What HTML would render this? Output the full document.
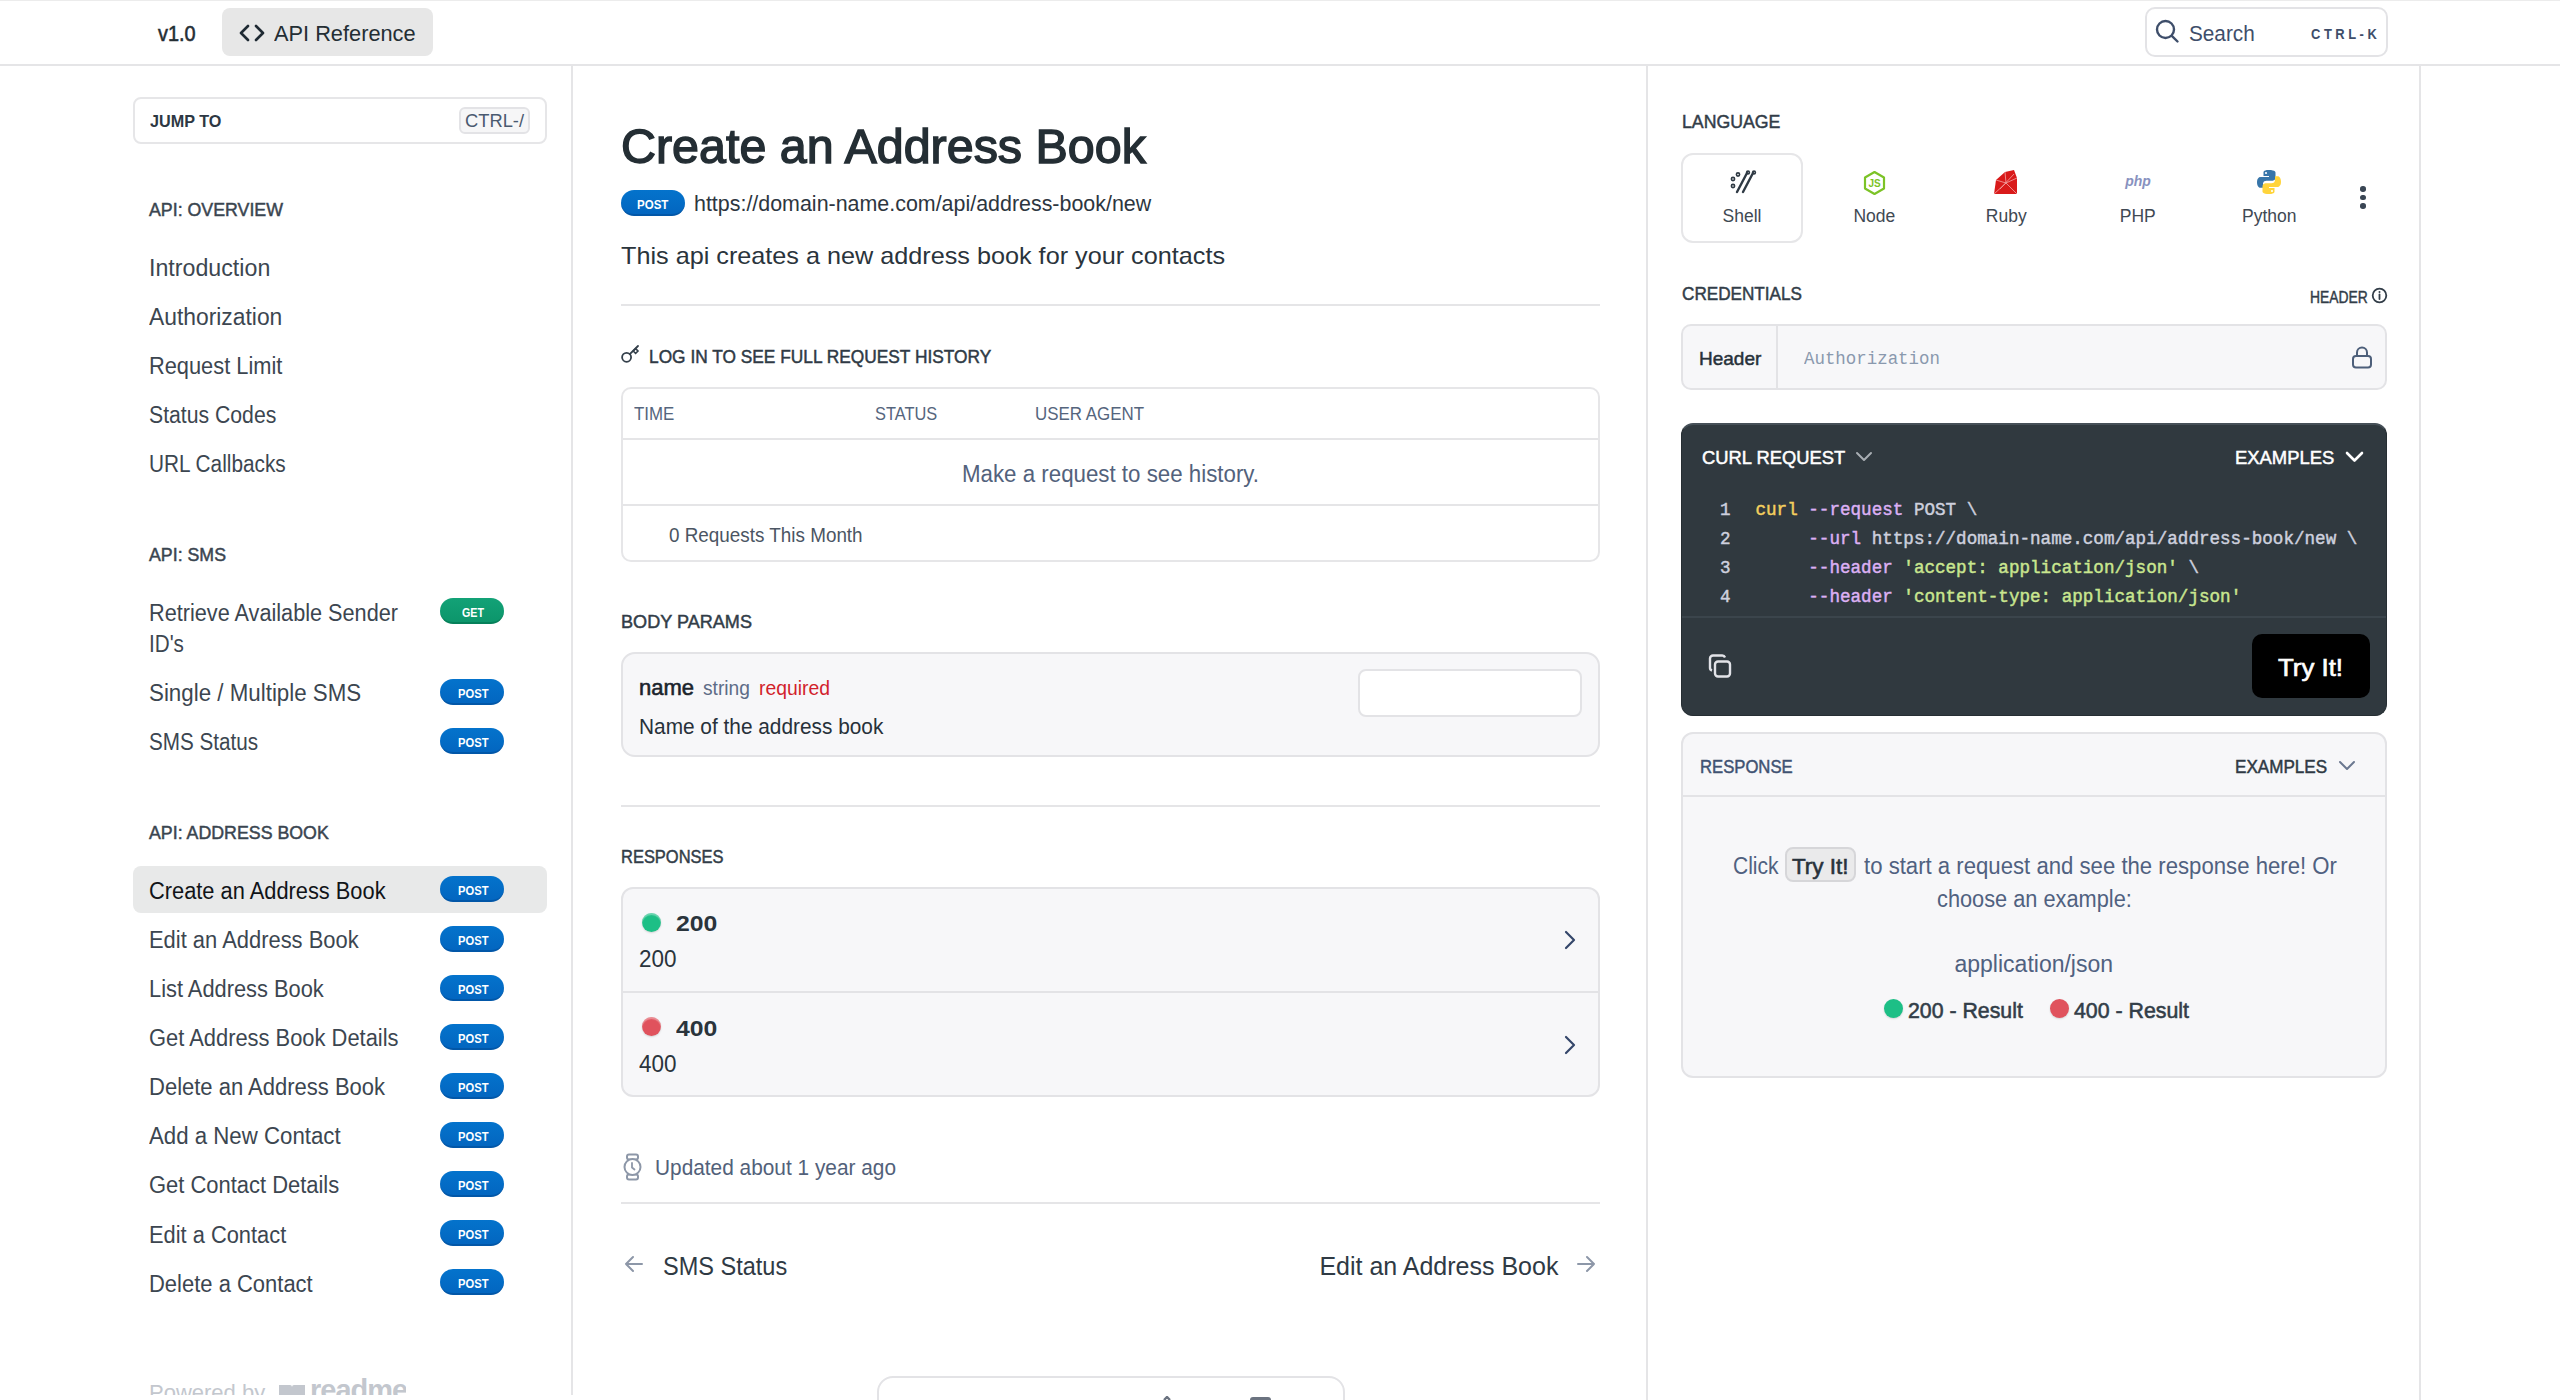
<!DOCTYPE html>
<html><head><meta charset="utf-8"><title>Create an Address Book</title>
<style>
html,body{margin:0;padding:0;background:#fff;width:2560px;height:1400px;overflow:hidden;position:relative}
.t{position:absolute;white-space:nowrap;line-height:0;height:0}
</style></head><body>
<div style="position:absolute;left:0px;top:0px;width:2560px;height:1px;background:#ececec"></div>
<div style="position:absolute;left:0px;top:64px;width:2560px;height:2px;background:#e5e5e7"></div>
<div style="position:absolute;left:571px;top:66px;width:2px;height:1329px;background:#e5e5e7"></div>
<div style="position:absolute;left:1646px;top:66px;width:2px;height:1334px;background:#e5e5e7"></div>
<div style="position:absolute;left:2419px;top:66px;width:2px;height:1334px;background:#e5e5e7"></div>
<div class="t" style="left:158.00px;top:34px;font-family:'Liberation Sans', sans-serif;font-weight:400;font-size:22px;color:#242e34;transform:scaleX(0.9043);transform-origin:0 0;-webkit-text-stroke:0.57px #242e34;">v1.0</div>
<div style="position:absolute;left:222px;top:8px;width:211px;height:48px;background:#e7e7e7;border-radius:8px"></div>
<svg style="position:absolute;left:238px;top:24px;" width="28" height="18" viewBox="0 0 28 18"><path d="M10 2 L3 9 L10 16 M18 2 L25 9 L18 16" fill="none" stroke="#1f2a33" stroke-width="2.6" stroke-linecap="round" stroke-linejoin="round"/></svg>
<div class="t" style="left:274.00px;top:33.6px;font-family:'Liberation Sans', sans-serif;font-weight:400;font-size:21.5px;color:#242e34;transform:scaleX(1.0128);transform-origin:0 0;">API Reference</div>
<div style="position:absolute;left:2145px;top:7px;width:243px;height:50px;box-sizing:border-box;border:2px solid #e3e3e6;border-radius:10px;background:#fff"></div>
<svg style="position:absolute;left:2155px;top:19px;" width="25" height="25" viewBox="0 0 25 25"><circle cx="10.5" cy="10.5" r="8.5" fill="none" stroke="#3e4e6a" stroke-width="2.4"/><path d="M16.8 16.8 L22.5 22.5" stroke="#3e4e6a" stroke-width="2.4" stroke-linecap="round"/></svg>
<div class="t" style="left:2189.00px;top:34px;font-family:'Liberation Sans', sans-serif;font-weight:400;font-size:22px;color:#3e4e6a;transform:scaleX(0.9427);transform-origin:0 0;">Search</div>
<div class="t" style="left:2311.00px;top:33.5px;font-family:'Liberation Sans', sans-serif;font-weight:700;font-size:14px;color:#3e4e6a;transform:scaleX(0.9216);transform-origin:0 0;">C T R L - K</div>
<div style="position:absolute;left:133px;top:97px;width:414px;height:47px;box-sizing:border-box;border:2px solid #e6e6e8;border-radius:8px;background:#fff"></div>
<div class="t" style="left:149.60px;top:122px;font-family:'Liberation Sans', sans-serif;font-weight:700;font-size:17px;color:#2d3843;transform:scaleX(0.9526);transform-origin:0 0;">JUMP TO</div>
<div style="position:absolute;left:459px;top:107px;width:71px;height:27px;box-sizing:border-box;border:2px solid #e3e3e6;border-radius:6px;background:#f6f6f7"></div>
<div class="t" style="left:465.00px;top:121px;font-family:'Liberation Sans', sans-serif;font-weight:400;font-size:18px;color:#4a5a70;transform:scaleX(1.0173);transform-origin:0 0;">CTRL-/</div>
<div class="t" style="left:149.00px;top:209.6px;font-family:'Liberation Sans', sans-serif;font-weight:400;font-size:18px;color:#3a4550;transform:scaleX(0.9875);transform-origin:0 0;-webkit-text-stroke:0.47px #3a4550;">API: OVERVIEW</div>
<div class="t" style="left:149.00px;top:267.7px;font-family:'Liberation Sans', sans-serif;font-weight:400;font-size:23px;color:#3c4650;transform:scaleX(1.0092);transform-origin:0 0;">Introduction</div>
<div class="t" style="left:149.00px;top:317.1px;font-family:'Liberation Sans', sans-serif;font-weight:400;font-size:23px;color:#3c4650;transform:scaleX(0.9929);transform-origin:0 0;">Authorization</div>
<div class="t" style="left:149.00px;top:365.6px;font-family:'Liberation Sans', sans-serif;font-weight:400;font-size:23px;color:#3c4650;transform:scaleX(0.9479);transform-origin:0 0;">Request Limit</div>
<div class="t" style="left:149.00px;top:414.6px;font-family:'Liberation Sans', sans-serif;font-weight:400;font-size:23px;color:#3c4650;transform:scaleX(0.9220);transform-origin:0 0;">Status Codes</div>
<div class="t" style="left:149.00px;top:464px;font-family:'Liberation Sans', sans-serif;font-weight:400;font-size:23px;color:#3c4650;transform:scaleX(0.9038);transform-origin:0 0;">URL Callbacks</div>
<div class="t" style="left:149.00px;top:554.5px;font-family:'Liberation Sans', sans-serif;font-weight:400;font-size:18px;color:#3a4550;transform:scaleX(0.9868);transform-origin:0 0;-webkit-text-stroke:0.47px #3a4550;">API: SMS</div>
<div class="t" style="left:149.00px;top:613px;font-family:'Liberation Sans', sans-serif;font-weight:400;font-size:23px;color:#3c4650;transform:scaleX(0.9423);transform-origin:0 0;">Retrieve Available Sender</div>
<div class="t" style="left:149.00px;top:643.5px;font-family:'Liberation Sans', sans-serif;font-weight:400;font-size:23px;color:#3c4650;transform:scaleX(0.8973);transform-origin:0 0;">ID's</div>
<div style="position:absolute;left:440px;top:598px;width:64px;height:26px;box-sizing:border-box;background:linear-gradient(#13a277,#0c966b);border-radius:13px;border-bottom:2px solid #06805a"></div>
<div class="t" style="left:462.00px;top:612.6px;font-family:'Liberation Sans', sans-serif;font-weight:700;font-size:13.5px;color:#fff;transform:scaleX(0.7926);transform-origin:0 0;">GET</div>
<div class="t" style="left:149.00px;top:692.6px;font-family:'Liberation Sans', sans-serif;font-weight:400;font-size:23px;color:#3c4650;transform:scaleX(0.9710);transform-origin:0 0;">Single / Multiple SMS</div>
<div style="position:absolute;left:440px;top:679px;width:64px;height:26px;box-sizing:border-box;background:linear-gradient(#0473cc,#0366c0);border-radius:13px;border-bottom:2px solid #0257a8"></div>
<div class="t" style="left:457.50px;top:693.8px;font-family:'Liberation Sans', sans-serif;font-weight:700;font-size:13.5px;color:#fff;transform:scaleX(0.8297);transform-origin:0 0;">POST</div>
<div class="t" style="left:149.00px;top:742px;font-family:'Liberation Sans', sans-serif;font-weight:400;font-size:23px;color:#3c4650;transform:scaleX(0.8984);transform-origin:0 0;">SMS Status</div>
<div style="position:absolute;left:440px;top:728px;width:64px;height:26px;box-sizing:border-box;background:linear-gradient(#0473cc,#0366c0);border-radius:13px;border-bottom:2px solid #0257a8"></div>
<div class="t" style="left:457.50px;top:742.8px;font-family:'Liberation Sans', sans-serif;font-weight:700;font-size:13.5px;color:#fff;transform:scaleX(0.8297);transform-origin:0 0;">POST</div>
<div class="t" style="left:149.00px;top:832.7px;font-family:'Liberation Sans', sans-serif;font-weight:400;font-size:18px;color:#3a4550;transform:scaleX(0.9876);transform-origin:0 0;-webkit-text-stroke:0.47px #3a4550;">API: ADDRESS BOOK</div>
<div style="position:absolute;left:133px;top:866px;width:414px;height:47px;background:#e8e9e9;border-radius:8px"></div>
<div class="t" style="left:149.00px;top:890.8px;font-family:'Liberation Sans', sans-serif;font-weight:400;font-size:23px;color:#111418;transform:scaleX(0.9488);transform-origin:0 0;">Create an Address Book</div>
<div style="position:absolute;left:440px;top:876px;width:64px;height:26px;box-sizing:border-box;background:linear-gradient(#0473cc,#0366c0);border-radius:13px;border-bottom:2px solid #0257a8"></div>
<div class="t" style="left:457.50px;top:890.8px;font-family:'Liberation Sans', sans-serif;font-weight:700;font-size:13.5px;color:#fff;transform:scaleX(0.8297);transform-origin:0 0;">POST</div>
<div class="t" style="left:149.00px;top:939.9px;font-family:'Liberation Sans', sans-serif;font-weight:400;font-size:23px;color:#3c4650;transform:scaleX(0.9533);transform-origin:0 0;">Edit an Address Book</div>
<div style="position:absolute;left:440px;top:926px;width:64px;height:26px;box-sizing:border-box;background:linear-gradient(#0473cc,#0366c0);border-radius:13px;border-bottom:2px solid #0257a8"></div>
<div class="t" style="left:457.50px;top:940.8px;font-family:'Liberation Sans', sans-serif;font-weight:700;font-size:13.5px;color:#fff;transform:scaleX(0.8297);transform-origin:0 0;">POST</div>
<div class="t" style="left:149.00px;top:989.0px;font-family:'Liberation Sans', sans-serif;font-weight:400;font-size:23px;color:#3c4650;transform:scaleX(0.9493);transform-origin:0 0;">List Address Book</div>
<div style="position:absolute;left:440px;top:975px;width:64px;height:26px;box-sizing:border-box;background:linear-gradient(#0473cc,#0366c0);border-radius:13px;border-bottom:2px solid #0257a8"></div>
<div class="t" style="left:457.50px;top:989.8px;font-family:'Liberation Sans', sans-serif;font-weight:700;font-size:13.5px;color:#fff;transform:scaleX(0.8297);transform-origin:0 0;">POST</div>
<div class="t" style="left:149.00px;top:1038.1px;font-family:'Liberation Sans', sans-serif;font-weight:400;font-size:23px;color:#3c4650;transform:scaleX(0.9520);transform-origin:0 0;">Get Address Book Details</div>
<div style="position:absolute;left:440px;top:1024px;width:64px;height:26px;box-sizing:border-box;background:linear-gradient(#0473cc,#0366c0);border-radius:13px;border-bottom:2px solid #0257a8"></div>
<div class="t" style="left:457.50px;top:1038.8px;font-family:'Liberation Sans', sans-serif;font-weight:700;font-size:13.5px;color:#fff;transform:scaleX(0.8297);transform-origin:0 0;">POST</div>
<div class="t" style="left:149.00px;top:1087.2px;font-family:'Liberation Sans', sans-serif;font-weight:400;font-size:23px;color:#3c4650;transform:scaleX(0.9566);transform-origin:0 0;">Delete an Address Book</div>
<div style="position:absolute;left:440px;top:1073px;width:64px;height:26px;box-sizing:border-box;background:linear-gradient(#0473cc,#0366c0);border-radius:13px;border-bottom:2px solid #0257a8"></div>
<div class="t" style="left:457.50px;top:1087.8px;font-family:'Liberation Sans', sans-serif;font-weight:700;font-size:13.5px;color:#fff;transform:scaleX(0.8297);transform-origin:0 0;">POST</div>
<div class="t" style="left:149.00px;top:1136.3px;font-family:'Liberation Sans', sans-serif;font-weight:400;font-size:23px;color:#3c4650;transform:scaleX(0.9669);transform-origin:0 0;">Add a New Contact</div>
<div style="position:absolute;left:440px;top:1122px;width:64px;height:26px;box-sizing:border-box;background:linear-gradient(#0473cc,#0366c0);border-radius:13px;border-bottom:2px solid #0257a8"></div>
<div class="t" style="left:457.50px;top:1136.8px;font-family:'Liberation Sans', sans-serif;font-weight:700;font-size:13.5px;color:#fff;transform:scaleX(0.8297);transform-origin:0 0;">POST</div>
<div class="t" style="left:149.00px;top:1185.4px;font-family:'Liberation Sans', sans-serif;font-weight:400;font-size:23px;color:#3c4650;transform:scaleX(0.9538);transform-origin:0 0;">Get Contact Details</div>
<div style="position:absolute;left:440px;top:1171px;width:64px;height:26px;box-sizing:border-box;background:linear-gradient(#0473cc,#0366c0);border-radius:13px;border-bottom:2px solid #0257a8"></div>
<div class="t" style="left:457.50px;top:1185.8px;font-family:'Liberation Sans', sans-serif;font-weight:700;font-size:13.5px;color:#fff;transform:scaleX(0.8297);transform-origin:0 0;">POST</div>
<div class="t" style="left:149.00px;top:1234.5px;font-family:'Liberation Sans', sans-serif;font-weight:400;font-size:23px;color:#3c4650;transform:scaleX(0.9497);transform-origin:0 0;">Edit a Contact</div>
<div style="position:absolute;left:440px;top:1220px;width:64px;height:26px;box-sizing:border-box;background:linear-gradient(#0473cc,#0366c0);border-radius:13px;border-bottom:2px solid #0257a8"></div>
<div class="t" style="left:457.50px;top:1234.8px;font-family:'Liberation Sans', sans-serif;font-weight:700;font-size:13.5px;color:#fff;transform:scaleX(0.8297);transform-origin:0 0;">POST</div>
<div class="t" style="left:149.00px;top:1283.6px;font-family:'Liberation Sans', sans-serif;font-weight:400;font-size:23px;color:#3c4650;transform:scaleX(0.9555);transform-origin:0 0;">Delete a Contact</div>
<div style="position:absolute;left:440px;top:1269px;width:64px;height:26px;box-sizing:border-box;background:linear-gradient(#0473cc,#0366c0);border-radius:13px;border-bottom:2px solid #0257a8"></div>
<div class="t" style="left:457.50px;top:1283.8px;font-family:'Liberation Sans', sans-serif;font-weight:700;font-size:13.5px;color:#fff;transform:scaleX(0.8297);transform-origin:0 0;">POST</div>
<div class="t" style="left:149.00px;top:1393px;font-family:'Liberation Sans', sans-serif;font-weight:400;font-size:22px;color:#c3c7ce;">Powered by</div>
<div style="position:absolute;left:276px;top:1378px;width:130px;height:17px;overflow:hidden"><svg width="28" height="18" viewBox="0 0 28 18" style="position:absolute;left:2px;top:5px"><path d="M1 2 h11 a2 2 0 0 1 2 2 a2 2 0 0 1 2 -2 h11 v15 h-11 a2 2 0 0 0 -2 1 a2 2 0 0 0 -2 -1 h-11z" fill="#c3c7ce"/></svg><div style="position:absolute;left:34px;top:-4px;font:700 29px 'Liberation Sans',sans-serif;color:#c3c7ce;letter-spacing:-1px">readme</div></div>
<div style="position:absolute;left:0px;top:1395px;width:571px;height:5px;background:#fff"></div>
<div class="t" style="left:621.00px;top:146.5px;font-family:'Liberation Sans', sans-serif;font-weight:400;font-size:48px;color:#242e34;transform:scaleX(1.0088);transform-origin:0 0;-webkit-text-stroke:1.44px #242e34;">Create an Address Book</div>
<div style="position:absolute;left:621px;top:190px;width:64px;height:26px;box-sizing:border-box;background:linear-gradient(#0473cc,#0366c0);border-radius:13px;border-bottom:2px solid #0257a8"></div>
<div class="t" style="left:637.20px;top:204.8px;font-family:'Liberation Sans', sans-serif;font-weight:700;font-size:13.7px;color:#fff;transform:scaleX(0.8417);transform-origin:0 0;">POST</div>
<div class="t" style="left:693.75px;top:204px;font-family:'Liberation Sans', sans-serif;font-weight:400;font-size:22px;color:#2d3640;transform:scaleX(0.9736);transform-origin:0 0;">https://domain-name.com/api/address-book/new</div>
<div class="t" style="left:621.00px;top:255.75px;font-family:'Liberation Sans', sans-serif;font-weight:400;font-size:24px;color:#2a343c;transform:scaleX(1.0505);transform-origin:0 0;">This api creates a new address book for your contacts</div>
<div style="position:absolute;left:621px;top:304px;width:979px;height:2px;background:#e5e5e7"></div>
<svg style="position:absolute;left:620px;top:344px;" width="22" height="22" viewBox="0 0 22 22"><circle cx="6.6" cy="13.3" r="4.5" fill="none" stroke="#34404b" stroke-width="1.8"/><path d="M9.8 10.1 L18 2" fill="none" stroke="#34404b" stroke-width="1.8" stroke-linecap="round"/><path d="M15.6 4.6 L18 7 L15.6 9.4 L13.2 7 Z" fill="none" stroke="#34404b" stroke-width="1.6"/></svg>
<div class="t" style="left:648.75px;top:356.7px;font-family:'Liberation Sans', sans-serif;font-weight:400;font-size:18.5px;color:#2f3a45;transform:scaleX(0.9360);transform-origin:0 0;-webkit-text-stroke:0.48px #2f3a45;">LOG IN TO SEE FULL REQUEST HISTORY</div>
<div style="position:absolute;left:621px;top:387px;width:979px;height:175px;box-sizing:border-box;border:2px solid #e6e6e8;border-radius:10px;background:#fff"></div>
<div style="position:absolute;left:623px;top:438px;width:975px;height:2px;background:#e5e5e7"></div>
<div style="position:absolute;left:623px;top:504px;width:975px;height:2px;background:#e5e5e7"></div>
<div class="t" style="left:634.20px;top:413.7px;font-family:'Liberation Sans', sans-serif;font-weight:400;font-size:18px;color:#55657d;transform:scaleX(0.9372);transform-origin:0 0;">TIME</div>
<div class="t" style="left:874.80px;top:413.7px;font-family:'Liberation Sans', sans-serif;font-weight:400;font-size:18px;color:#55657d;transform:scaleX(0.9103);transform-origin:0 0;">STATUS</div>
<div class="t" style="left:1035.00px;top:413.7px;font-family:'Liberation Sans', sans-serif;font-weight:400;font-size:18px;color:#55657d;transform:scaleX(0.9394);transform-origin:0 0;">USER AGENT</div>
<div class="t" style="left:962.00px;top:474px;font-family:'Liberation Sans', sans-serif;font-weight:400;font-size:23px;color:#53627c;transform:scaleX(0.9694);transform-origin:0 0;">Make a request to see history.</div>
<div class="t" style="left:669.40px;top:535px;font-family:'Liberation Sans', sans-serif;font-weight:400;font-size:19.5px;color:#4b5563;transform:scaleX(0.9672);transform-origin:0 0;">0 Requests This Month</div>
<div class="t" style="left:621.00px;top:621.8px;font-family:'Liberation Sans', sans-serif;font-weight:400;font-size:18.5px;color:#323d48;transform:scaleX(0.9776);transform-origin:0 0;-webkit-text-stroke:0.48px #323d48;">BODY PARAMS</div>
<div style="position:absolute;left:621px;top:652px;width:979px;height:105px;box-sizing:border-box;border:2px solid #e3e3e6;border-radius:14px;background:#f7f7f9"></div>
<div class="t" style="left:639.00px;top:688.3px;font-family:'Liberation Sans', sans-serif;font-weight:400;font-size:22px;color:#1b242c;-webkit-text-stroke:0.57px #1b242c;">name</div>
<div class="t" style="left:703.00px;top:688.3px;font-family:'Liberation Sans', sans-serif;font-weight:400;font-size:20px;color:#5d6c87;transform:scaleX(0.9611);transform-origin:0 0;">string</div>
<div class="t" style="left:759.00px;top:688.3px;font-family:'Liberation Sans', sans-serif;font-weight:400;font-size:20px;color:#d21f2c;transform:scaleX(0.9676);transform-origin:0 0;">required</div>
<div class="t" style="left:639.00px;top:727px;font-family:'Liberation Sans', sans-serif;font-weight:400;font-size:21.5px;color:#27313a;transform:scaleX(0.9690);transform-origin:0 0;">Name of the address book</div>
<div style="position:absolute;left:1358px;top:669px;width:224px;height:48px;box-sizing:border-box;border:2px solid #e3e3e6;border-radius:8px;background:#fff"></div>
<div style="position:absolute;left:621px;top:805px;width:979px;height:2px;background:#e5e5e7"></div>
<div class="t" style="left:621.00px;top:856.7px;font-family:'Liberation Sans', sans-serif;font-weight:400;font-size:18px;color:#323d48;transform:scaleX(0.9149);transform-origin:0 0;-webkit-text-stroke:0.47px #323d48;">RESPONSES</div>
<div style="position:absolute;left:621px;top:887px;width:979px;height:210px;box-sizing:border-box;border:2px solid #e3e3e6;border-radius:12px;background:#f7f7f9"></div>
<div style="position:absolute;left:623px;top:991px;width:975px;height:2px;background:#e3e3e6"></div>
<div style="position:absolute;left:642px;top:912.5px;width:19px;height:19px;border-radius:50%;background:#1dbf86;box-shadow:0 1px 2px rgba(0,0,0,.15), inset 0 2px 1px rgba(255,255,255,.35)"></div>
<div class="t" style="left:675.50px;top:924px;font-family:'Liberation Sans', sans-serif;font-weight:700;font-size:22px;color:#2a343c;transform:scaleX(1.1255);transform-origin:0 0;">200</div>
<div class="t" style="left:638.50px;top:959px;font-family:'Liberation Sans', sans-serif;font-weight:400;font-size:24px;color:#2a343c;transform:scaleX(0.9368);transform-origin:0 0;">200</div>
<svg style="position:absolute;left:1562px;top:930px;" width="16" height="20" viewBox="0 0 16 20"><path d="M4 2 L12 10 L4 18" fill="none" stroke="#34466a" stroke-width="2.2" stroke-linecap="round" stroke-linejoin="round"/></svg>
<div style="position:absolute;left:642px;top:1017.0px;width:19px;height:19px;border-radius:50%;background:#e0525d;box-shadow:0 1px 2px rgba(0,0,0,.15), inset 0 2px 1px rgba(255,255,255,.35)"></div>
<div class="t" style="left:675.50px;top:1028.5px;font-family:'Liberation Sans', sans-serif;font-weight:700;font-size:22px;color:#2a343c;transform:scaleX(1.1255);transform-origin:0 0;">400</div>
<div class="t" style="left:638.50px;top:1063.5px;font-family:'Liberation Sans', sans-serif;font-weight:400;font-size:24px;color:#2a343c;transform:scaleX(0.9368);transform-origin:0 0;">400</div>
<svg style="position:absolute;left:1562px;top:1034.5px;" width="16" height="20" viewBox="0 0 16 20"><path d="M4 2 L12 10 L4 18" fill="none" stroke="#34466a" stroke-width="2.2" stroke-linecap="round" stroke-linejoin="round"/></svg>
<svg style="position:absolute;left:622px;top:1152px;" width="22" height="30" viewBox="0 0 22 30"><rect x="5" y="2.5" width="11" height="5" rx="2" fill="none" stroke="#8d97a8" stroke-width="2"/><rect x="5" y="22.5" width="11" height="5" rx="2" fill="none" stroke="#8d97a8" stroke-width="2"/><circle cx="10.5" cy="15" r="8" fill="#fff" stroke="#8d97a8" stroke-width="2"/><path d="M10 11 V15.5 L12.5 17.5" fill="none" stroke="#8d97a8" stroke-width="1.8" stroke-linecap="round"/></svg>
<div class="t" style="left:655.00px;top:1167.6px;font-family:'Liberation Sans', sans-serif;font-weight:400;font-size:21.5px;color:#52617a;transform:scaleX(0.9692);transform-origin:0 0;">Updated about 1 year ago</div>
<div style="position:absolute;left:621px;top:1202px;width:979px;height:2px;background:#e5e5e7"></div>
<svg style="position:absolute;left:622px;top:1254px;" width="22" height="20" viewBox="0 0 22 20"><path d="M20 10 H4 M11 3 L4 10 L11 17" fill="none" stroke="#8d97a8" stroke-width="2" stroke-linecap="round" stroke-linejoin="round"/></svg>
<div class="t" style="left:663.30px;top:1265.8px;font-family:'Liberation Sans', sans-serif;font-weight:400;font-size:25px;color:#2f3a44;transform:scaleX(0.9409);transform-origin:0 0;">SMS Status</div>
<div class="t" style="left:1319.40px;top:1266px;font-family:'Liberation Sans', sans-serif;font-weight:400;font-size:25px;color:#2f3a44;">Edit an Address Book</div>
<svg style="position:absolute;left:1576px;top:1254px;" width="22" height="20" viewBox="0 0 22 20"><path d="M2 10 H18 M11 3 L18 10 L11 17" fill="none" stroke="#8d97a8" stroke-width="2" stroke-linecap="round" stroke-linejoin="round"/></svg>
<div style="position:absolute;left:877px;top:1376px;width:468px;height:64px;box-sizing:border-box;border:2px solid #e3e3e6;border-radius:16px;background:#fff"></div>
<svg style="position:absolute;left:1160px;top:1396px;" width="14" height="4" viewBox="0 0 14 4"><path d="M4 4 L7 1 L10 4" fill="none" stroke="#6b7380" stroke-width="2.4"/></svg>
<div style="position:absolute;left:1250px;top:1397px;width:21px;height:3px;background:#6b7380;border-radius:3px 3px 0 0"></div>
<div class="t" style="left:1681.90px;top:122px;font-family:'Liberation Sans', sans-serif;font-weight:400;font-size:18px;color:#323d48;transform:scaleX(0.9837);transform-origin:0 0;-webkit-text-stroke:0.47px #323d48;">LANGUAGE</div>
<div style="position:absolute;left:1681px;top:153px;width:122px;height:90px;box-sizing:border-box;border:2px solid #e6e6e8;border-radius:12px;background:#fff"></div>
<div class="t" style="left:1722.54px;top:216px;font-family:'Liberation Sans', sans-serif;font-weight:400;font-size:17.5px;color:#3f4953;">Shell</div>
<div class="t" style="left:1853.48px;top:216px;font-family:'Liberation Sans', sans-serif;font-weight:400;font-size:17.5px;color:#3f4953;">Node</div>
<div class="t" style="left:1985.87px;top:216px;font-family:'Liberation Sans', sans-serif;font-weight:400;font-size:17.5px;color:#3f4953;">Ruby</div>
<div class="t" style="left:2119.76px;top:216px;font-family:'Liberation Sans', sans-serif;font-weight:400;font-size:17.5px;color:#3f4953;">PHP</div>
<div class="t" style="left:2242.01px;top:216px;font-family:'Liberation Sans', sans-serif;font-weight:400;font-size:17.5px;color:#3f4953;">Python</div>
<svg style="position:absolute;left:1728px;top:170px;" width="30" height="24" viewBox="0 0 30 24"><g fill="none" stroke="#2f3a44" stroke-width="1.6"><circle cx="5" cy="9" r="1.6"/><circle cx="5" cy="16" r="1.6"/><path d="M9 22 L19 3 M15 22 L25 3" stroke-width="2.4" stroke-linecap="round"/><circle cx="10" cy="4.5" r="1.6"/><circle cx="20" cy="2.5" r="1.4"/><circle cx="26" cy="2.5" r="1.4"/></g></svg>
<svg style="position:absolute;left:1862px;top:170px;" width="25" height="26" viewBox="0 0 25 26"><path d="M12.5 2 L22 7.5 V18.5 L12.5 24 L3 18.5 V7.5 Z" fill="none" stroke="#7cc327" stroke-width="2.2" stroke-linejoin="round"/><text x="12.6" y="17" text-anchor="middle" font-family="Liberation Sans" font-weight="700" font-size="10" fill="#7cc327">JS</text></svg>
<svg style="position:absolute;left:1992px;top:169px;" width="27" height="27" viewBox="0 0 27 27"><path d="M2 25 L4 11 L13 3 L22 1 L25 9 L25 25 Z" fill="#d91a1a"/><path d="M4 11 L14 14 L25 9 M14 14 L13 3 M14 14 L2 25 M14 14 L25 25 M8 20 L22 5" stroke="#f2a5a5" stroke-width="0.8" fill="none"/></svg>
<svg style="position:absolute;left:2122px;top:173px;" width="32" height="18" viewBox="0 0 32 18"><text x="16" y="13" text-anchor="middle" font-family="Liberation Sans" font-style="italic" font-weight="700" font-size="14" fill="#8892bf">php</text></svg>
<svg style="position:absolute;left:2255px;top:168px;" width="28" height="28" viewBox="0 0 28 28"><path d="M13.5 2 C8 2 8.5 4.5 8.5 4.5 V8 H14 V9 H6 C6 9 2 8.6 2 14.3 C2 20 5.5 19.8 5.5 19.8 H8 V16.3 C8 16.3 7.8 12.8 11.5 12.8 H17 C17 12.8 20.5 12.9 20.5 9.5 V4.6 C20.5 4.6 21 2 13.5 2 Z" fill="#3775a9"/><path d="M14.5 26 C20 26 19.5 23.5 19.5 23.5 V20 H14 V19 H22 C22 19 26 19.4 26 13.7 C26 8 22.5 8.2 22.5 8.2 H20 V11.7 C20 11.7 20.2 15.2 16.5 15.2 H11 C11 15.2 7.5 15.1 7.5 18.5 V23.4 C7.5 23.4 7 26 14.5 26 Z" fill="#ffd43b"/><circle cx="11" cy="5" r="1.1" fill="#fff"/><circle cx="17" cy="23" r="1.1" fill="#fff"/></svg>
<div style="position:absolute;left:2360.25px;top:186.25px;width:5.5px;height:5.5px;border-radius:50%;background:#3a4654"></div>
<div style="position:absolute;left:2360.25px;top:194.75px;width:5.5px;height:5.5px;border-radius:50%;background:#3a4654"></div>
<div style="position:absolute;left:2360.25px;top:203.25px;width:5.5px;height:5.5px;border-radius:50%;background:#3a4654"></div>
<div class="t" style="left:1681.50px;top:293.75px;font-family:'Liberation Sans', sans-serif;font-weight:400;font-size:18px;color:#323d48;transform:scaleX(0.9521);transform-origin:0 0;-webkit-text-stroke:0.47px #323d48;">CREDENTIALS</div>
<div class="t" style="left:2310.00px;top:297.5px;font-family:'Liberation Sans', sans-serif;font-weight:400;font-size:16px;color:#323d48;transform:scaleX(0.8652);transform-origin:0 0;-webkit-text-stroke:0.42px #323d48;">HEADER</div>
<svg style="position:absolute;left:2371px;top:287px;" width="17" height="17" viewBox="0 0 17 17"><circle cx="8.5" cy="8.5" r="6.8" fill="none" stroke="#323d48" stroke-width="1.8"/><path d="M8.5 7.5 V12" stroke="#323d48" stroke-width="1.8" stroke-linecap="round"/><circle cx="8.5" cy="5" r="1" fill="#323d48"/></svg>
<div style="position:absolute;left:1681px;top:324px;width:706px;height:66px;box-sizing:border-box;border:2px solid #e3e3e6;border-radius:10px;background:#f7f7f9"></div>
<div style="position:absolute;left:1776px;top:326px;width:2px;height:62px;background:#e3e3e6"></div>
<div class="t" style="left:1699.00px;top:359px;font-family:'Liberation Sans', sans-serif;font-weight:400;font-size:19px;color:#27313a;-webkit-text-stroke:0.49px #27313a;">Header</div>
<div class="t" style="left:1803.50px;top:358.5px;font-family:'Liberation Mono', monospace;font-weight:400;font-size:17.5px;color:#8a99ae;transform:scaleX(0.9955);transform-origin:0 0;">Authorization</div>
<svg style="position:absolute;left:2350px;top:344px;" width="24" height="26" viewBox="0 0 24 26"><path d="M7 12 V8.5 a5 5 0 0 1 10 0 V12" fill="none" stroke="#4d5f7a" stroke-width="2"/><rect x="3" y="12" width="18" height="11.5" rx="3" fill="none" stroke="#4d5f7a" stroke-width="2"/></svg>
<div style="position:absolute;left:1681px;top:423px;width:706px;height:293px;box-sizing:border-box;background:#30393f;border-radius:12px;border:1px solid #262e33;border-top:2px solid #465058"></div>
<div class="t" style="left:1701.50px;top:458.3px;font-family:'Liberation Sans', sans-serif;font-weight:400;font-size:18.5px;color:#ffffff;transform:scaleX(0.9928);transform-origin:0 0;-webkit-text-stroke:0.48px #ffffff;">CURL REQUEST</div>
<svg style="position:absolute;left:1855px;top:451px;" width="18" height="12" viewBox="0 0 18 12"><path d="M2 2 L9 9 L16 2" fill="none" stroke="#a8aeb3" stroke-width="2" stroke-linecap="round" stroke-linejoin="round"/></svg>
<div class="t" style="left:2234.70px;top:458.4px;font-family:'Liberation Sans', sans-serif;font-weight:400;font-size:18.5px;color:#ffffff;transform:scaleX(0.9957);transform-origin:0 0;-webkit-text-stroke:0.48px #ffffff;">EXAMPLES</div>
<svg style="position:absolute;left:2345px;top:450px;" width="19" height="14" viewBox="0 0 19 14"><path d="M2 3 L9.5 10.5 L17 3" fill="none" stroke="#ffffff" stroke-width="2.6" stroke-linecap="round" stroke-linejoin="round"/></svg>
<div class="t" style="left:1720px;top:510px;font-family:'Liberation Mono', monospace;font-size:17.6px;color:#cdd0de;-webkit-text-stroke:0.45px currentColor">1</div>
<div class="t" style="left:1755.5px;top:510px;font-family:'Liberation Mono', monospace;font-size:17.6px;color:#cdd0de;-webkit-text-stroke:0.45px currentColor"><span style="color:#f4cf5e">curl</span><span style="color:#c8cad8">&nbsp;</span><span style="color:#dcb0f4">--request</span><span style="color:#cdd0de">&nbsp;POST&nbsp;\</span></div>
<div class="t" style="left:1720px;top:539.4px;font-family:'Liberation Mono', monospace;font-size:17.6px;color:#cdd0de;-webkit-text-stroke:0.45px currentColor">2</div>
<div class="t" style="left:1755.5px;top:539.4px;font-family:'Liberation Mono', monospace;font-size:17.6px;color:#cdd0de;-webkit-text-stroke:0.45px currentColor"><span style="color:#c8cad8">&nbsp;&nbsp;&nbsp;&nbsp;&nbsp;</span><span style="color:#dcb0f4">--url</span><span style="color:#cdd0de">&nbsp;https://domain-name.com/api/address-book/new&nbsp;\</span></div>
<div class="t" style="left:1720px;top:568.4px;font-family:'Liberation Mono', monospace;font-size:17.6px;color:#cdd0de;-webkit-text-stroke:0.45px currentColor">3</div>
<div class="t" style="left:1755.5px;top:568.4px;font-family:'Liberation Mono', monospace;font-size:17.6px;color:#cdd0de;-webkit-text-stroke:0.45px currentColor"><span style="color:#c8cad8">&nbsp;&nbsp;&nbsp;&nbsp;&nbsp;</span><span style="color:#dcb0f4">--header</span><span style="color:#c8cad8">&nbsp;</span><span style="color:#c9e68f">'accept:&nbsp;application/json'</span><span style="color:#cdd0de">&nbsp;\</span></div>
<div class="t" style="left:1720px;top:596.8px;font-family:'Liberation Mono', monospace;font-size:17.6px;color:#cdd0de;-webkit-text-stroke:0.45px currentColor">4</div>
<div class="t" style="left:1755.5px;top:596.8px;font-family:'Liberation Mono', monospace;font-size:17.6px;color:#cdd0de;-webkit-text-stroke:0.45px currentColor"><span style="color:#c8cad8">&nbsp;&nbsp;&nbsp;&nbsp;&nbsp;</span><span style="color:#dcb0f4">--header</span><span style="color:#c8cad8">&nbsp;</span><span style="color:#c9e68f">'content-type:&nbsp;application/json'</span></div>
<div style="position:absolute;left:1682px;top:616px;width:704px;height:2px;background:#3b454c"></div>
<svg style="position:absolute;left:1706px;top:652px;" width="30" height="30" viewBox="0 0 30 30"><rect x="9" y="9.5" width="15" height="15" rx="3" fill="none" stroke="#e2e3e8" stroke-width="2.4"/><path d="M19 5.5 A3 3 0 0 0 16 3.5 H7 A3 3 0 0 0 4 6.5 V15.5 A3 3 0 0 0 6 18.5" fill="none" stroke="#e2e3e8" stroke-width="2.4"/></svg>
<div style="position:absolute;left:2252px;top:634px;width:118px;height:64px;background:#000;border-radius:10px"></div>
<div class="t" style="left:2278.00px;top:668px;font-family:'Liberation Sans', sans-serif;font-weight:400;font-size:23.5px;color:#ffffff;transform:scaleX(1.0985);transform-origin:0 0;-webkit-text-stroke:0.61px #ffffff;">Try It!</div>
<div style="position:absolute;left:1681px;top:732px;width:706px;height:346px;box-sizing:border-box;border:2px solid #e3e3e6;border-radius:12px;background:#f7f7f9"></div>
<div style="position:absolute;left:1683px;top:795px;width:702px;height:2px;background:#e3e3e6"></div>
<div class="t" style="left:1700.20px;top:767px;font-family:'Liberation Sans', sans-serif;font-weight:400;font-size:18px;color:#3f5272;transform:scaleX(0.9258);transform-origin:0 0;-webkit-text-stroke:0.47px #3f5272;">RESPONSE</div>
<div class="t" style="left:2235.40px;top:767px;font-family:'Liberation Sans', sans-serif;font-weight:400;font-size:18px;color:#2f3a44;transform:scaleX(0.9491);transform-origin:0 0;-webkit-text-stroke:0.47px #2f3a44;">EXAMPLES</div>
<svg style="position:absolute;left:2338px;top:759px;" width="18" height="13" viewBox="0 0 18 13"><path d="M2 3 L9 10 L16 3" fill="none" stroke="#6b7890" stroke-width="2" stroke-linecap="round" stroke-linejoin="round"/></svg>
<div class="t" style="left:1733.00px;top:865.8px;font-family:'Liberation Sans', sans-serif;font-weight:400;font-size:23px;color:#506180;transform:scaleX(0.9141);transform-origin:0 0;">Click</div>
<div style="position:absolute;left:1785px;top:847px;width:71px;height:35px;box-sizing:border-box;border:2px solid #d6d6d9;border-radius:8px;background:#eaeaeb"></div>
<div class="t" style="left:1791.90px;top:866.6px;font-family:'Liberation Sans', sans-serif;font-weight:400;font-size:22.5px;color:#28323b;-webkit-text-stroke:0.58px #28323b;">Try It!</div>
<div class="t" style="left:1863.50px;top:865.8px;font-family:'Liberation Sans', sans-serif;font-weight:400;font-size:23px;color:#506180;transform:scaleX(0.9632);transform-origin:0 0;">to start a request and see the response here! Or</div>
<div class="t" style="left:1936.70px;top:899px;font-family:'Liberation Sans', sans-serif;font-weight:400;font-size:23px;color:#506180;transform:scaleX(0.9463);transform-origin:0 0;">choose an example:</div>
<div class="t" style="left:1954.50px;top:964.4px;font-family:'Liberation Sans', sans-serif;font-weight:400;font-size:23px;color:#506180;">application/json</div>
<div style="position:absolute;left:1884px;top:999px;width:19px;height:19px;border-radius:50%;background:#1dbf86;box-shadow:0 1px 2px rgba(0,0,0,.15)"></div>
<div class="t" style="left:1908.00px;top:1010.8px;font-family:'Liberation Sans', sans-serif;font-weight:400;font-size:22px;color:#323d48;transform:scaleX(0.9678);transform-origin:0 0;-webkit-text-stroke:0.57px #323d48;">200 - Result</div>
<div style="position:absolute;left:2049.5px;top:999px;width:19px;height:19px;border-radius:50%;background:#e0525d;box-shadow:0 1px 2px rgba(0,0,0,.15)"></div>
<div class="t" style="left:2073.50px;top:1010.8px;font-family:'Liberation Sans', sans-serif;font-weight:400;font-size:22px;color:#323d48;transform:scaleX(0.9694);transform-origin:0 0;-webkit-text-stroke:0.57px #323d48;">400 - Result</div>
</body></html>
